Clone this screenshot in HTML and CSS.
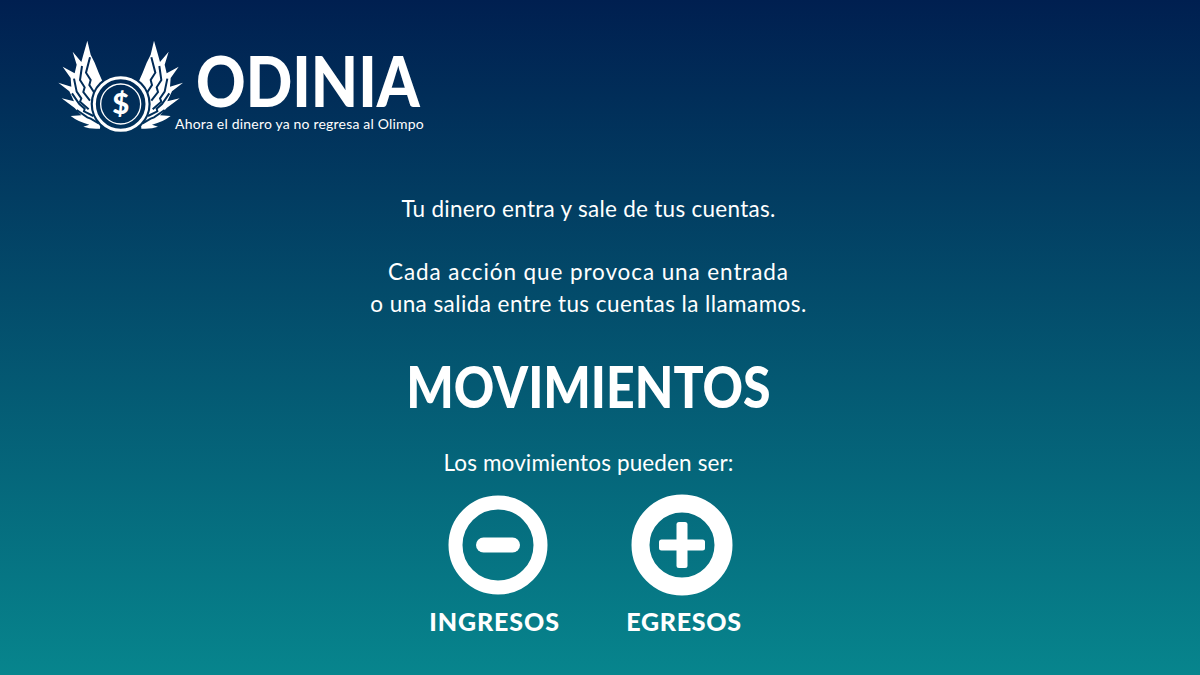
FILE: index.html
```html
<!DOCTYPE html>
<html lang="es">
<head>
    <meta charset="UTF-8">
    <title>Odinia - Movimientos</title>
    <link rel="stylesheet" href="styles.css">
</head>
<body>
    <header class="brand">
        <svg class="brand-mark" viewBox="0 0 450 330" aria-hidden="true">
            <defs>
                <mask id="wing-cut" maskUnits="userSpaceOnUse" x="0" y="0" width="450" height="330">
                    <rect width="450" height="330" fill="#fff"/>
                    <g fill="none" stroke="#000" stroke-width="6">
                        <path d="M120 82 L108 128 L122 150 L118 165 L134 190"/>
                        <path d="M96 108 L90 150 L104 172 L100 186 L120 212"/>
                        <path d="M72 146 L80 185 L94 205 L90 215 L116 238"/>
                        <path d="M66 190 L88 222 L104 236 L102 244 L130 258"/>
                        <path d="M80 240 L112 262 L122 266 L146 280"/>
                    </g>
                    <circle cx="212" cy="222" r="90" fill="#000"/>
                </mask>
                <g id="wing" mask="url(#wing-cut)">
                    <path d="M112 32 L122 74 L134 98 L146 128 L160 160 L150 296 Q120 298 100 290 L118 284 Q85 276 62 258 L94 256 L74 234 L35 205 L72 214 L58 184 L25 158 L64 170 L62 144 L38 110 L74 130 L80 104 L68 65 L94 96 L100 74 Z"/>
                </g>
            </defs>
            <g fill="#fff">
                <use href="#wing"/>
                <use href="#wing" transform="matrix(-1 0 0 1 424 0)"/>
            </g>
            <circle class="coin-ring" cx="212" cy="222" r="79" stroke-width="9"/>
            <circle class="coin-ring" cx="212" cy="222" r="60" stroke-width="4"/>
            <text class="coin-sign" x="212" y="253">$</text>
        </svg>
        <div class="brand-text">
            <div class="brand-name">ODINIA</div>
            <div class="brand-tag">Ahora el dinero ya no regresa al Olimpo</div>
        </div>
    </header>
    <main class="slide">
        <p class="intro line-a">Tu dinero entra y sale de tus cuentas.</p>
        <p class="intro">
            <span class="line-b">Cada acción que provoca una entrada</span><br>
            <span class="line-c">o una salida entre tus cuentas la llamamos.</span>
        </p>
        <h1>MOVIMIENTOS</h1>
        <p class="lead">Los movimientos pueden ser:</p>
        <div class="types">
            <div class="type type-in">
                <svg class="type-icon" viewBox="0 0 100 100" aria-hidden="true">
                    <circle cx="50" cy="50" r="42.5" stroke-width="14"/>
                    <rect x="28" y="42.500" width="44" height="15" rx="7.500"/>
                </svg>
                <div class="type-name">INGRESOS</div>
            </div>
            <div class="type type-out">
                <svg class="type-icon" viewBox="0 0 102 102" aria-hidden="true">
                    <circle cx="51" cy="51" r="41.5" stroke-width="18"/>
                    <rect x="28" y="45.500" width="46" height="11" rx="2.500"/>
                    <rect x="45.500" y="28" width="11" height="46" rx="2.500"/>
                </svg>
                <div class="type-name">EGRESOS</div>
            </div>
        </div>
    </main>
</body>
</html>
```

FILE: styles.css
```css
html, body {
    height: 100%;
}
body {
    margin: 0;
    overflow: hidden;
    background: linear-gradient(to bottom, #001f50, #07858d);
    color: #fff;
    font-family: 'Lato', sans-serif;
}
.brand {
    display: flex;
    align-items: flex-start;
    height: 110px;
    padding: 30px 0 0 50px;
}
.brand-mark {
    width: 150px;
    height: 110px;
    flex: none;
}
.coin-ring {
    fill: none;
    stroke: #fff;
}
.coin-sign {
    fill: #fff;
    font-family: 'Lato', sans-serif;
    font-weight: 900;
    font-size: 88px;
    text-anchor: middle;
}
.brand-text {
    margin-left: -4px;
}
.brand-name {
    margin-top: 25px;
    font-size: 70px;
    line-height: 50px;
    font-weight: 900;
    white-space: nowrap;
    transform: scaleX(0.875);
    transform-origin: left center;
}
.brand-tag {
    margin: 10px 0 0 -21px;
    font-size: 14px;
    line-height: 18px;
    letter-spacing: 0.190px;
    white-space: nowrap;
}
.slide {
    display: flex;
    flex-direction: column;
    align-items: center;
    width: 1177px;
    margin-top: 53px;
}
.slide p {
    margin: 0;
    text-align: center;
    font-size: 22.500px;
    line-height: 32px;
    letter-spacing: 0.130px;
}
.slide .line-a {
    letter-spacing: 0.280px;
}
.line-b {
    letter-spacing: 0.900px;
}
.line-c {
    letter-spacing: 0.430px;
}
.slide .intro + .intro {
    margin-top: 31px;
}
h1 {
    margin: 31px 0 0;
    font-size: 58px;
    line-height: 70px;
    font-weight: 900;
    transform: scaleX(0.862);
}
.slide .lead {
    margin-top: 26px;
}
.types {
    display: flex;
    gap: 68px;
    margin: 16px 0 0 2px;
}
.type {
    display: flex;
    flex-direction: column;
    align-items: center;
    width: 116px;
}
.type-icon {
    width: 100px;
    height: 100px;
    fill: #fff;
}
.type-icon circle {
    fill: none;
    stroke: #fff;
}
.type-out .type-icon {
    width: 102px;
    height: 102px;
    margin: -1px 0;
}
.type-name {
    margin-top: 11px;
    font-size: 25px;
    line-height: 30px;
    font-weight: 900;
    white-space: nowrap;
}
.type-in .type-name {
    margin-right: 6px;
    letter-spacing: 0.900px;
}
.type-out .type-name {
    margin-left: 5px;
    letter-spacing: 0.700px;
}
```
